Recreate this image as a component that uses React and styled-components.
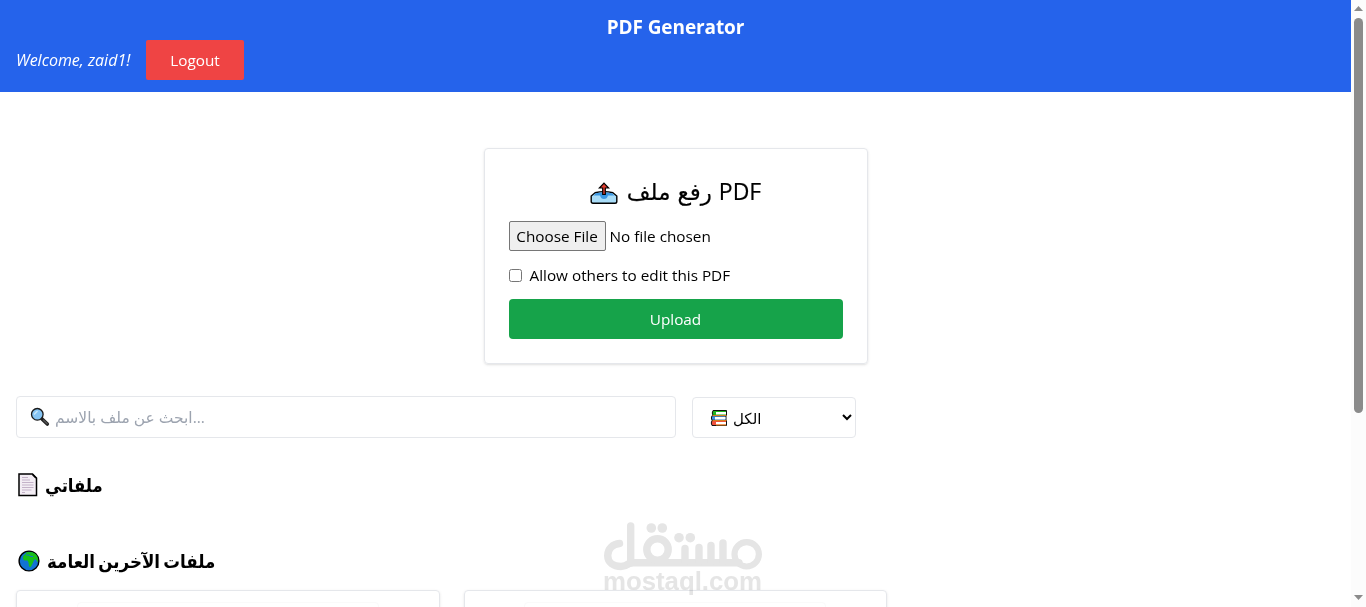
import React, { useState } from "react";
import styled, { createGlobalStyle } from "styled-components";

const GlobalStyle = createGlobalStyle`
  * {
    box-sizing: border-box;
  }
  body {
    margin: 0;
    background: #fff;
    color: #000;
    font-family: "Open Sans", "Noto Sans", "DejaVu Sans", sans-serif;
    font-size: 15.3px;
    line-height: 24px;
    overflow: hidden;
  }
  h1, h2, h3 {
    margin: 0;
  }
  button, input {
    font: inherit;
    letter-spacing: inherit;
  }
`;

const OutboxIcon = () => (
  <svg width="28" height="24" viewBox="0 0 28 24">
    <path
      d="M1.2 16 L5 12.8 Q14 10.5 23 12.8 L26.8 16 V21.5 Q26.8 23.3 25 23.3 H3 Q1.2 23.3 1.2 21.5 Z"
      fill="#a9dcf7"
      stroke="#000"
      strokeWidth="1.4"
    />
    <path d="M3.5 15.5 L6 13.3 Q14 11.5 22 13.3 L24.5 15.5 H18 Q17 19 14 19 T10 15.5 Z" fill="#3b97e3" />
    <path d="M14 3.2 L18.6 8 H15.3 V14.5 H12.7 V8 H9.4 Z" fill="#e23c2e" stroke="#000" strokeWidth="1.2" />
  </svg>
);

const SearchIcon = () => (
  <svg width="20" height="20" viewBox="0 0 20 20">
    <path d="M11.5 11.5 L17.3 17" stroke="#222" strokeWidth="3.6" strokeLinecap="round" />
    <path d="M13.5 13.3 L17 16.5" stroke="#555" strokeWidth="1.4" strokeLinecap="round" />
    <circle cx="7.3" cy="7.3" r="5.8" fill="#86c5f4" stroke="#1a1a1a" strokeWidth="1.3" />
    <path d="M4 7.5 L7.5 4" stroke="#c9e7fb" strokeWidth="1.5" />
  </svg>
);

const BooksIcon = () => (
  <svg width="18" height="18" viewBox="0 0 18 18">
    <path d="M3 1.5 H16.5 V6.5 H3 Q1.5 4 3 1.5Z" fill="#1fb51f" stroke="#111" />
    <path d="M6 3 H16 V5.5 H6Z" fill="#fff" />
    <path d="M2 6.7 H16 V11.3 H2 Q.7 9 2 6.7Z" fill="#3b8fe8" stroke="#111" />
    <path d="M5 8 H15.5 V10.5 H5Z" fill="#fff" />
    <path d="M2 11.5 H16.5 V16.5 H2 Q.5 14 2 11.5Z" fill="#f0503c" stroke="#111" />
    <path d="M6 13 H16 V15.5 H6Z" fill="#fff" />
    <path d="M2.5 6.6 H16.5 M2.5 11.6 H16.5 M6 16 H16" stroke="#e88a20" />
  </svg>
);

const PageIcon = () => (
  <svg width="20" height="24" viewBox="0 0 20 24">
    <path d="M1 1 H14.5 L18.5 5 V22.5 H1 Z" fill="#f3edf4" stroke="#000" strokeWidth="1.5" />
    <path d="M14.5 1.5 L18 5" stroke="#000" strokeWidth="1.5" />
    <path d="M4 4.5 H10 M4 7 H12 M4 9.5 H15.5 M4 12 H15.5 M4 14.5 H15.5 M4 17 H13.5 M4 19.5 H7" stroke="#c4b2c9" />
  </svg>
);

const GlobeIcon = () => (
  <svg width="22" height="22" viewBox="0 0 22 22">
    <circle cx="11" cy="11" r="9.9" fill="#1173d4" stroke="#000" strokeWidth="1.4" />
    <path
      d="M5.2 6 L8 3.5 L8.5 2.2 Q17 .8 19.6 7 Q20.6 10 19.8 12.5 L18.3 10 L17 9 L15.8 10.5 L14.8 13 L12.8 17 L11 16.5 L10.5 12.5 L9.5 10.5 L6.5 10.5 L5 9 Z"
      fill="#18c018"
    />
    <path d="M8 5 H10.5 L13 6.5 H15" fill="none" stroke="#1173d4" />
  </svg>
);

const MostaqlLogo = () => (
  <svg width="160" height="78" viewBox="0 0 160 78">
    <g fill="none" stroke="#e5e5e5" strokeWidth="7.4" strokeLinecap="round">
      <path d="M16.5 24.5 C10 25 4.7 29.5 4.7 36.5 C4.7 43.5 10.5 47.5 18 47.5 C24 47.5 26 43.8 28 43.8 H136" />
      <path d="M27.7 7 V44" />
      <path d="M82 43 V29.5 M96 43 V28.5 M108 43 V26.5 M120 43 V24" />
      <circle cx="143.7" cy="35.3" r="12.2" strokeWidth="6.2" />
      <circle cx="54.5" cy="30.5" r="10.7" />
    </g>
    <g fill="#e5e5e5">
      <circle cx="48.3" cy="9" r="4.8" />
      <circle cx="59.3" cy="9" r="4.8" />
      <circle cx="76" cy="18.7" r="4.8" />
      <circle cx="87.3" cy="18.7" r="4.8" />
      <text
        x="0"
        y="70.5"
        fontFamily="Liberation Sans, sans-serif"
        fontWeight="700"
        fontSize="25.8"
        textLength="159"
      >
        mostaql.com
      </text>
    </g>
  </svg>
);

const Screen = styled.div`
  display: flex;
  width: 1366px;
  height: 607px;
  overflow: hidden;
  position: relative;
`;

const Page = styled.div`
  flex: 1;
  min-width: 0;
`;

const Header = styled.header`
  height: 92px;
  padding: 12px 16px;
  background: #2563eb;
  color: #fff;
`;

const Title = styled.h1`
  font-size: 19px;
  line-height: 30px;
  height: 28px;
  font-weight: 700;
  letter-spacing: -0.1px;
  text-align: center;
`;

const UserRow = styled.div`
  display: flex;
  align-items: center;
  gap: 16px;
`;

const Welcome = styled.span`
  width: 114px;
  font-size: 16px;
  font-style: italic;
  white-space: nowrap;
`;

const Button = styled.button`
  width: ${({ $width }) => $width};
  height: 40px;
  padding: 0;
  border: 0;
  border-radius: ${({ $radius }) => $radius || "4px"};
  background: ${({ $color }) => $color};
  color: #fff;
`;

const Main = styled.main`
  padding: 56px 16px 0;
`;

const UploadCard = styled.section`
  width: 384px;
  height: 216px;
  margin: 0 auto 32px;
  padding: 24px;
  border: 1px solid #e5e7eb;
  border-radius: 4px;
  box-shadow: 0 1px 3px rgba(0, 0, 0, 0.1), 0 1px 2px -1px rgba(0, 0, 0, 0.1);
`;

const UploadTitle = styled.h2`
  display: flex;
  align-items: center;
  justify-content: center;
  gap: 9px;
  height: 32px;
  margin-bottom: 16px;
  padding-top: 4px;
  font-weight: 500;
  word-spacing: 1px;
  -webkit-text-stroke: 0.2px #000;
  svg {
    margin-top: 2px;
  }
`;

const Arabic = styled.span`
  font-family: "Open Sans", ${({ $narrow }) => ($narrow ? '"DejaVu Sans Condensed", ' : "")}"DejaVu Sans", sans-serif;
  font-size: ${({ $size }) => $size};
  font-stretch: ${({ $narrow }) => ($narrow ? "condensed" : "normal")};
  white-space: nowrap;
`;

const FileRow = styled.div`
  display: flex;
  align-items: center;
  gap: 4px;
  height: 30px;
  margin-bottom: 12px;
`;

const FileButton = styled.button`
  width: 97px;
  height: 30px;
  padding: 0;
  border: 1px solid #767676;
  border-radius: 2px;
  background: #efefef;
  white-space: nowrap;
`;

const CheckLabel = styled.label`
  display: flex;
  align-items: center;
  gap: 8px;
  height: 24px;
  margin-bottom: 12px;
  input {
    width: 13px;
    height: 13px;
    margin: 0;
  }
`;

const Filters = styled.div`
  display: flex;
  align-items: flex-end;
  gap: 16px;
  height: 42px;
`;

const Field = styled.div`
  display: flex;
  align-items: center;
  width: ${({ $width }) => $width};
  height: ${({ $height }) => $height};
  padding: ${({ $padding }) => $padding};
  gap: 5px;
  border: 1px solid #e5e7eb;
  border-radius: 4px;
`;

const SearchInput = styled.input`
  flex: 1;
  padding: 0;
  border: 0;
  outline: 0;
  font-family: "Open Sans", "DejaVu Sans", sans-serif;
  font-size: 15.5px;
  &::placeholder {
    color: #9ca3af;
  }
`;

const Chevron = styled.svg`
  margin-left: auto;
`;

const SectionTitle = styled.h3`
  display: flex;
  align-items: center;
  gap: 7px;
  height: 28px;
  margin-top: ${({ $top }) => $top};
  padding-left: 2px;
  font-weight: 700;
`;

const Grid = styled.div`
  display: grid;
  grid-template-columns: repeat(3, 1fr);
  gap: 24px;
  margin-top: 15px;
`;

const FileCard = styled.div`
  height: 200px;
  padding-top: 11px;
  border: 1px solid #e5e7eb;
  border-radius: 4px;
  box-shadow: 0 1px 3px rgba(0, 0, 0, 0.1);
`;

const Preview = styled.div`
  width: 302px;
  height: 150px;
  margin: 0 auto;
  border: 1px solid #fafafa;
  border-radius: 4px;
`;

const ScrollBar = styled.div`
  display: flex;
  flex-direction: column;
  align-items: center;
  width: 15px;
  height: 607px;
  padding: 6px 0 7px;
  background: #fcfcfc;
`;

const Thumb = styled.div`
  width: 9px;
  height: 395px;
  margin: 7px 0 auto;
  border-radius: 5px;
  background: #8b8b8b;
`;

const Arrow = styled.div`
  width: 9px;
  height: 5px;
  background: #8b8b8b;
  clip-path: ${({ $up }) => ($up ? "polygon(50% 0, 100% 100%, 0 100%)" : "polygon(0 0, 100% 0, 50% 100%)")};
`;

const Watermark = styled.div`
  position: absolute;
  left: 603px;
  top: 519px;
  mix-blend-mode: multiply;
`;

const App = () => {
  const [search, setSearch] = useState("");
  const [canEdit, setCanEdit] = useState(false);
  return (
    <Screen>
      <GlobalStyle />
      <Page>
        <Header>
          <Title>PDF Generator</Title>
          <UserRow>
            <Welcome>Welcome, zaid1!</Welcome>
            <Button $width="98px" $color="#ef4444" $radius="2px">
              Logout
            </Button>
          </UserRow>
        </Header>
        <Main>
          <UploadCard>
            <UploadTitle>
              <OutboxIcon />
              <Arabic $size="23px">رفع ملف PDF</Arabic>
            </UploadTitle>
            <FileRow>
              <FileButton>Choose File</FileButton>
              <span>No file chosen</span>
            </FileRow>
            <CheckLabel>
              <input type="checkbox" checked={canEdit} onChange={(e) => setCanEdit(e.target.checked)} />
              Allow others to edit this PDF
            </CheckLabel>
            <Button $width="100%" $color="#16a34a">
              Upload
            </Button>
          </UploadCard>
          <Filters>
            <Field $width="660px" $height="42px" $padding="0 13px">
              <SearchIcon />
              <SearchInput
                value={search}
                onChange={(e) => setSearch(e.target.value)}
                placeholder="ابحث عن ملف بالاسم..."
              />
            </Field>
            <Field $width="164px" $height="41px" $padding="0 3px 0 17px">
              <BooksIcon />
              <Arabic $size="15px">الكل</Arabic>
              <Chevron width="10" height="7" viewBox="0 0 10 7">
                <path d="M1 1 L5 5 L9 1" fill="none" stroke="#000" strokeWidth="2" />
              </Chevron>
            </Field>
          </Filters>
          <SectionTitle $top="33px">
            <PageIcon />
            <Arabic $size="18.3px" $narrow>
              ملفاتي
            </Arabic>
          </SectionTitle>
          <SectionTitle $top="48px">
            <GlobeIcon />
            <Arabic $size="18.5px" $narrow>
              ملفات الآخرين العامة
            </Arabic>
          </SectionTitle>
          <Grid>
            <FileCard>
              <Preview />
            </FileCard>
            <FileCard>
              <Preview />
            </FileCard>
          </Grid>
        </Main>
      </Page>
      <ScrollBar>
        <Arrow $up />
        <Thumb />
        <Arrow />
      </ScrollBar>
      <Watermark>
        <MostaqlLogo />
      </Watermark>
    </Screen>
  );
};

export default App;
